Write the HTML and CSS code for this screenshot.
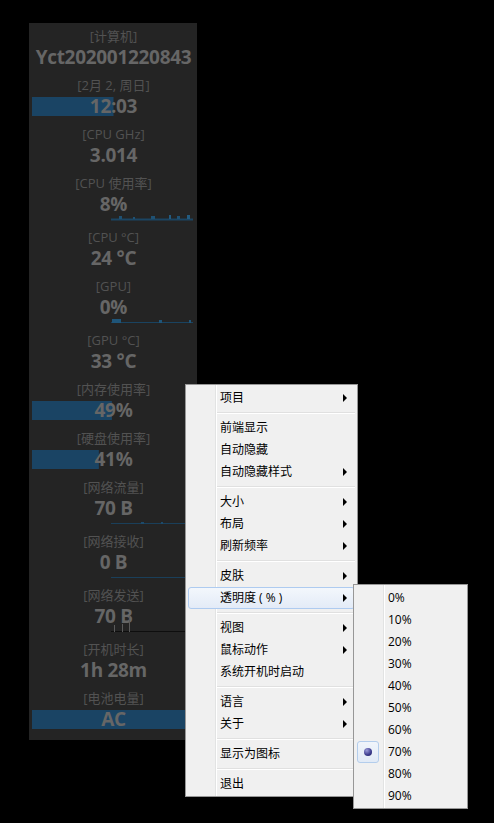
FILE: index.html
```html
<!DOCTYPE html>
<html lang="zh-CN">
<head>
    <meta charset="UTF-8">
    <title>TrafficMonitor</title>
    <link rel="stylesheet" href="styles.css">
</head>
<body>
    <!-- 监控面板 -->
    <div class="panel">
        <div class="row">
            <div class="label">[计算机]</div>
            <div class="value">Yct202001220843</div>
        </div>
        <div class="row">
            <div class="label">[2月 2, 周日]</div>
            <div class="value bar" style="background-size: 50% 19px">12:03</div>
        </div>
        <div class="row">
            <div class="label">[CPU GHz]</div>
            <div class="value">3.014</div>
        </div>
        <div class="row">
            <div class="label">[CPU 使用率]</div>
            <div class="value">8%</div>
            <svg class="graph" width="82" height="18" viewBox="0 0 82 18">
                <polyline points="0,16.5 82,16.5" stroke="#1b4563" stroke-width="2" fill="none"/>
                <rect x="8" y="13" width="3" height="3" fill="#1f5173"/>
                <rect x="22" y="14" width="2" height="2" fill="#1f5173"/>
                <rect x="40" y="13" width="4" height="3" fill="#1f5173"/>
                <rect x="58" y="12" width="2" height="4" fill="#235b80"/>
                <rect x="66" y="13" width="3" height="3" fill="#1f5173"/>
                <rect x="76" y="12" width="3" height="4" fill="#235b80"/>
            </svg>
        </div>
        <div class="row">
            <div class="label">[CPU °C]</div>
            <div class="value">24 °C</div>
        </div>
        <div class="row">
            <div class="label">[GPU]</div>
            <div class="value">0%</div>
            <svg class="graph" width="82" height="18" viewBox="0 0 82 18">
                <polyline points="0,16.5 82,16.5" stroke="#1a4360" stroke-width="1" fill="none"/>
                <rect x="1" y="13" width="9" height="4" fill="#1f5579"/>
                <rect x="48" y="14" width="3" height="3" fill="#1f5579"/>
                <rect x="78" y="14" width="2" height="3" fill="#1f5579"/>
            </svg>
        </div>
        <div class="row">
            <div class="label">[GPU °C]</div>
            <div class="value">33 °C</div>
        </div>
        <div class="row">
            <div class="label">[内存使用率]</div>
            <div class="value bar" style="background-size: 49% 19px">49%</div>
        </div>
        <div class="row">
            <div class="label">[硬盘使用率]</div>
            <div class="value bar" style="background-size: 41% 19px">41%</div>
        </div>
        <div class="row">
            <div class="label">[网络流量]</div>
            <div class="value">70 B</div>
            <svg class="graph" width="82" height="18" viewBox="0 0 82 18">
                <polyline points="0,16.5 82,16.5" stroke="#1a3f5a" stroke-width="1" fill="none"/>
                <rect x="30" y="15" width="3" height="2" fill="#1d4a6a"/>
                <rect x="50" y="15" width="2" height="2" fill="#1d4a6a"/>
            </svg>
        </div>
        <div class="row">
            <div class="label">[网络接收]</div>
            <div class="value">0 B</div>
            <svg class="graph" width="82" height="18" viewBox="0 0 82 18">
                <polyline points="0,16.5 82,16.5" stroke="#1a3f5a" stroke-width="1" fill="none"/>
            </svg>
        </div>
        <div class="row">
            <div class="label">[网络发送]</div>
            <div class="value">70 B</div>
            <svg class="graph" width="82" height="18" viewBox="0 0 82 18">
                <polyline points="0,16.5 82,16.5" stroke="#0e0e0e" stroke-width="1" fill="none"/>
                <rect x="3" y="10" width="1" height="7" fill="#5a5a5a"/>
                <rect x="11" y="9" width="1" height="8" fill="#5a5a5a"/>
                <rect x="18" y="1" width="1" height="16" fill="#5a5a5a"/>
            </svg>
        </div>
        <div class="row">
            <div class="label">[开机时长]</div>
            <div class="value">1h 28m</div>
        </div>
        <div class="row">
            <div class="label">[电池电量]</div>
            <div class="value bar" style="background-size: 100% 19px">AC</div>
        </div>
    </div>

    <!-- 右键菜单 -->
    <div class="menu main-menu">
        <div class="menu-item">项目<span class="arrow"></span></div>
        <div class="menu-sep"></div>
        <div class="menu-item">前端显示</div>
        <div class="menu-item">自动隐藏</div>
        <div class="menu-item">自动隐藏样式<span class="arrow"></span></div>
        <div class="menu-sep"></div>
        <div class="menu-item">大小<span class="arrow"></span></div>
        <div class="menu-item">布局<span class="arrow"></span></div>
        <div class="menu-item">刷新频率<span class="arrow"></span></div>
        <div class="menu-sep"></div>
        <div class="menu-item">皮肤<span class="arrow"></span></div>
        <div class="menu-item active">透明度 ( % )<span class="arrow"></span></div>
        <div class="menu-sep"></div>
        <div class="menu-item">视图<span class="arrow"></span></div>
        <div class="menu-item">鼠标动作<span class="arrow"></span></div>
        <div class="menu-item">系统开机时启动</div>
        <div class="menu-sep"></div>
        <div class="menu-item">语言<span class="arrow"></span></div>
        <div class="menu-item">关于<span class="arrow"></span></div>
        <div class="menu-sep"></div>
        <div class="menu-item">显示为图标</div>
        <div class="menu-sep"></div>
        <div class="menu-item">退出</div>
    </div>

    <!-- 透明度子菜单 -->
    <div class="menu sub-menu">
        <div class="menu-item">0%</div>
        <div class="menu-item">10%</div>
        <div class="menu-item">20%</div>
        <div class="menu-item">30%</div>
        <div class="menu-item">40%</div>
        <div class="menu-item">50%</div>
        <div class="menu-item">60%</div>
        <div class="menu-item checked"><span class="radio"></span>70%</div>
        <div class="menu-item">80%</div>
        <div class="menu-item">90%</div>
    </div>
</body>
</html>
```

FILE: styles.css
```css
body {
    margin: 0;
    background-color: #000;
    height: 823px;
    overflow: hidden;
}
.panel {
    margin: 23px 0 0 29px;
    width: 168px;
    height: 717px;
    box-sizing: border-box;
    padding: 4px 2px 0 3px;
    background-color: #242424;
    text-align: center;
}
.row {
    display: flex;
    flex-direction: column;
    padding-bottom: 7px;
}
.label {
    height: 18px;
    line-height: 18px;
    font-family: "Open Sans", "Noto Sans CJK SC", sans-serif;
    font-size: 13px;
    color: #525252;
    white-space: nowrap;
}
.value {
    height: 24px;
    line-height: 24px;
    font-family: "Open Sans", "Noto Sans CJK SC", sans-serif;
    font-size: 19px;
    font-weight: 700;
    color: #666;
    white-space: nowrap;
    letter-spacing: -0.3px;
}
.bar {
    background-image: linear-gradient(#1a4464, #1a4464);
    background-repeat: no-repeat;
    background-position: 0 3px;
}
.graph {
    display: block;
    align-self: flex-end;
    margin: -13px 2px 0 0;
}

/* 菜单 */
.menu {
    position: absolute;
    box-sizing: border-box;
    border: 1px solid #979797;
    padding: 2px;
    background-color: #f0f0f0;
    background-image: linear-gradient(to right, transparent 29px, #e2e3e3 29px, #e2e3e3 30px, #fff 30px, #fff 31px, transparent 31px);
    font-family: "Open Sans", "Noto Sans CJK SC", sans-serif;
    font-size: 12px;
    color: #000;
}
.main-menu {
    left: 185px;
    top: 384px;
    width: 173px;
    height: 413px;
}
.sub-menu {
    left: 353px;
    top: 584px;
    width: 115px;
    height: 225px;
}
.menu-item {
    position: relative;
    height: 22px;
    line-height: 22px;
    padding-left: 32px;
    box-sizing: border-box;
    white-space: nowrap;
}
.menu-item.active {
    border: 1px solid #aecbf0;
    border-radius: 3px;
    background: linear-gradient(#f3f7fc, #e3ebf7);
    padding-left: 31px;
    line-height: 20px;
}
.arrow {
    position: absolute;
    right: 8px;
    top: 7px;
    width: 0;
    height: 0;
    border-left: 4px solid #000;
    border-top: 4px solid transparent;
    border-bottom: 4px solid transparent;
}
.menu-item.active .arrow {
    right: 7px;
    top: 6px;
}
.menu-sep {
    height: 8px;
    box-sizing: border-box;
    margin-left: 29px;
    padding-top: 3px;
}
.menu-sep::before {
    content: "";
    display: block;
    height: 1px;
    background-color: #e0e0e0;
    border-bottom: 1px solid #fff;
}
.radio {
    position: absolute;
    left: 1px;
    top: 0;
    width: 20px;
    height: 20px;
    border: 1px solid #b3cdec;
    border-radius: 3px;
    background: linear-gradient(#f0f5fb, #e1eaf6);
}
.radio::after {
    content: "";
    position: absolute;
    left: 6px;
    top: 6px;
    width: 8px;
    height: 8px;
    border-radius: 50%;
    background: radial-gradient(circle at 35% 30%, #9a9ad8, #3a3a8c 60%, #23235e);
}
```
